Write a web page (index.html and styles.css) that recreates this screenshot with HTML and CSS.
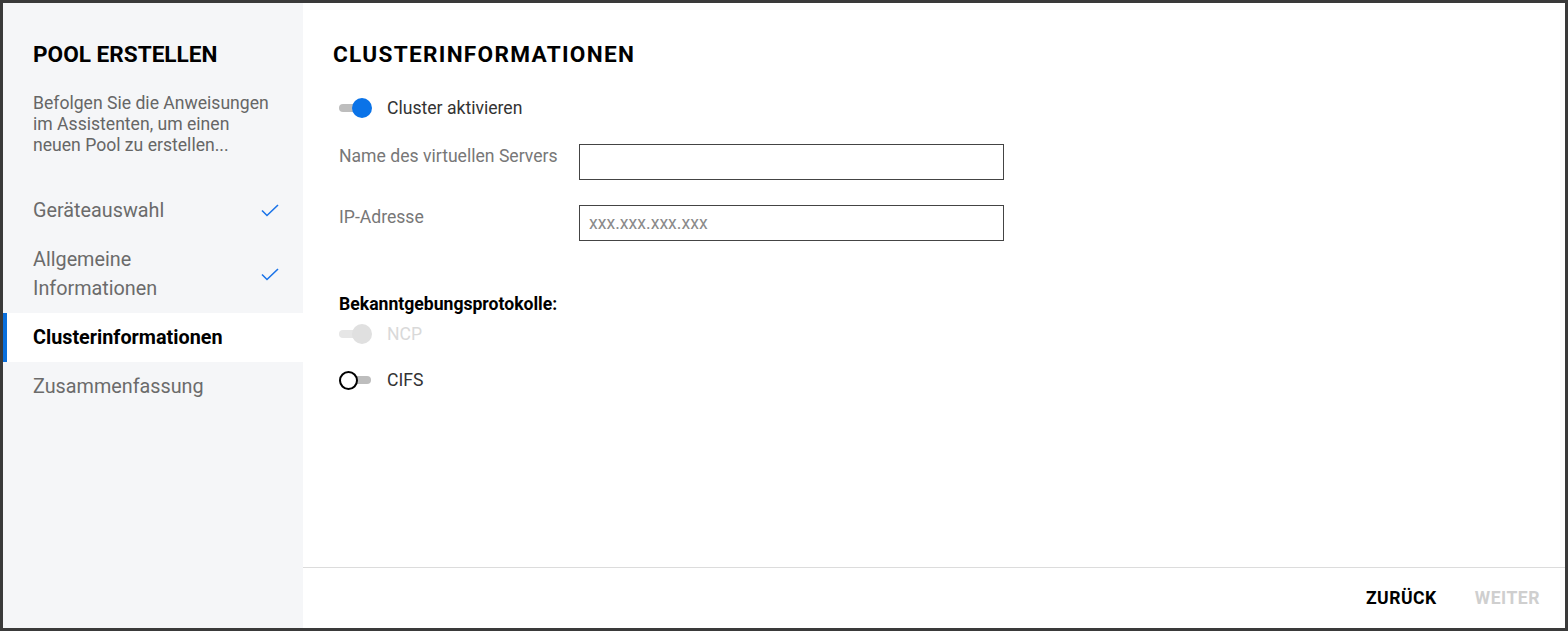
FILE: index.html
```html
<!DOCTYPE html>
<html lang="de">
<head>
<meta charset="utf-8">
<title>Pool erstellen</title>
<link rel="stylesheet" href="styles.css">
</head>
<body>
<div class="dialog">
  <aside class="sidebar">
    <h1 class="side-title">POOL ERSTELLEN</h1>
    <p class="side-desc">Befolgen Sie die Anweisungen im Assistenten, um einen neuen Pool zu erstellen...</p>
    <ul class="steps">
      <li class="step done"><span>Geräteauswahl</span>
        <svg class="check" width="18" height="13" viewBox="0 0 18 13"><polyline points="1,6.5 6,11.5 17,1" fill="none" stroke="#1a73e8" stroke-width="1.6"/></svg>
      </li>
      <li class="step done"><span>Allgemeine<br>Informationen</span>
        <svg class="check" width="18" height="13" viewBox="0 0 18 13"><polyline points="1,6.5 6,11.5 17,1" fill="none" stroke="#1a73e8" stroke-width="1.6"/></svg>
      </li>
      <li class="step active"><span>Clusterinformationen</span></li>
      <li class="step"><span>Zusammenfassung</span></li>
    </ul>
  </aside>
  <main class="main">
    <div class="content">
      <h2 class="main-title">CLUSTERINFORMATIONEN</h2>
      <div class="toggle-row">
        <span class="toggle on"><span class="track"></span><span class="knob"></span></span>
        <span class="toggle-label">Cluster aktivieren</span>
      </div>
      <div class="form">
        <div class="field">
          <label class="field-label">Name des virtuellen Servers</label>
          <input class="input" type="text">
        </div>
        <div class="field">
          <label class="field-label">IP-Adresse</label>
          <input class="input" type="text" placeholder="xxx.xxx.xxx.xxx">
        </div>
      </div>
      <div class="protocols">
        <div class="proto-title">Bekanntgebungsprotokolle:</div>
        <div class="toggle-row ncp">
          <span class="toggle disabled"><span class="track"></span><span class="knob"></span></span>
          <span class="toggle-label muted">NCP</span>
        </div>
        <div class="toggle-row cifs">
          <span class="toggle off"><span class="track"></span><span class="knob"></span></span>
          <span class="toggle-label">CIFS</span>
        </div>
      </div>
    </div>
    <footer class="footer">
      <button class="btn back">ZURÜCK</button>
      <button class="btn next">WEITER</button>
    </footer>
  </main>
</div>
</body>
</html>
```
FILE: styles.css
```css
* { box-sizing: border-box; }
html, body { margin: 0; height: 100%; }
body {
  background: #3a3a3a;
  padding: 3px;
  font-family: Roboto, "Liberation Sans", sans-serif;
}
.dialog {
  display: flex;
  width: 1562px;
  height: 625px;
  background: #fff;
}
.sidebar {
  width: 300px;
  flex: none;
  background: #f5f6f8;
  padding-top: 37px;
}
.side-title {
  margin: 0 0 23px 30px;
  font-size: 22.6px;
  line-height: 30px;
  font-weight: 700;
  color: #000;
}
.side-desc {
  margin: 0 30px 30px 30px;
  font-size: 17.6px;
  line-height: 21px;
  color: #666;
}
.steps { list-style: none; margin: 0; padding: 0; }
.step {
  display: flex;
  align-items: center;
  justify-content: space-between;
  padding: 10px 24px 10px 30px;
  font-size: 19.8px;
  line-height: 29px;
  color: #6b6b6b;
}
.step .check { flex: none; }
.step.active {
  background: #fff;
  color: #000;
  font-weight: 700;
  box-shadow: inset 4px 0 0 #0a6fdc;
}
.main {
  flex: 1;
  display: flex;
  flex-direction: column;
}
.content {
  flex: 1;
  padding: 37px 30px 0 30px;
}
.main-title {
  margin: 0;
  font-size: 22.6px;
  line-height: 30px;
  font-weight: 700;
  letter-spacing: 1.3px;
  color: #000;
}
.toggle-row {
  display: flex;
  align-items: center;
  gap: 15px;
  margin-left: 6px;
  height: 20px;
}
.content > .toggle-row { margin-top: 28px; }
.toggle {
  position: relative;
  width: 33px;
  height: 20px;
  flex: none;
}
.track {
  position: absolute;
  left: 0;
  top: 6px;
  width: 32px;
  height: 8px;
  border-radius: 4px;
  background: #bdbdbd;
}
.knob {
  position: absolute;
  top: 0;
  width: 20px;
  height: 20px;
  border-radius: 50%;
}
.toggle.on .knob { left: 13px; background: #0a73e8; }
.toggle.disabled .track { background: #e6e6e6; }
.toggle.disabled .knob { left: 13px; background: #e0e0e0; }
.toggle.off .knob {
  left: 0;
  top: 1px;
  width: 19px;
  height: 19px;
  background: #fff;
  border: 2px solid #000;
}
.toggle-label {
  font-size: 17.6px;
  color: #333;
}
.toggle-label.muted { color: #d9d9d9; }
.form {
  margin-top: 26px;
  margin-left: 6px;
  display: flex;
  flex-direction: column;
  gap: 25px;
}
.field { display: flex; align-items: flex-start; }
.field-label {
  width: 240px;
  padding-top: 2px;
  font-size: 17.6px;
  line-height: 21px;
  color: #777;
}
.input {
  width: 425px;
  height: 36px;
  border: 1px solid #444;
  border-radius: 0;
  padding: 0 9px;
  font-family: Roboto, "Liberation Sans", sans-serif;
  font-size: 17.6px;
  color: #333;
  outline: none;
}
.input::placeholder { color: #8a8a8a; }
.protocols { margin-top: 53px; margin-left: 6px; }
.proto-title {
  font-size: 17.6px;
  line-height: 21px;
  font-weight: 700;
  letter-spacing: 0;
  color: #000;
}
.protocols .toggle-row { margin-left: 0; }
.toggle-row.ncp { margin-top: 9px; }
.toggle-row.cifs { margin-top: 26px; }
.footer {
  height: 61px;
  flex: none;
  border-top: 1px solid #dcdcdc;
  display: flex;
  align-items: center;
  justify-content: flex-end;
  padding-right: 13px;
  gap: 14px;
}
.btn {
  background: none;
  border: none;
  padding: 6px 12px;
  font-family: Roboto, "Liberation Sans", sans-serif;
  font-size: 17.6px;
  font-weight: 700;
  letter-spacing: 0.5px;
  cursor: pointer;
}
.btn.back { color: #000; }
.btn.next { color: #cfcfcf; }
```
